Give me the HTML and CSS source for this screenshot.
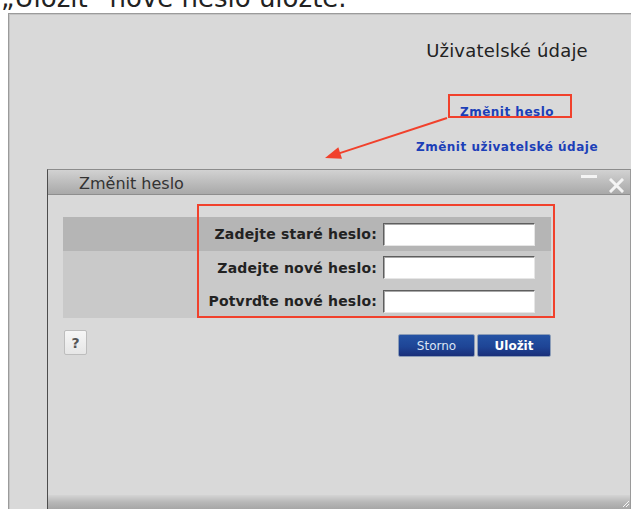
FILE: index.html
```html
<!DOCTYPE html>
<html lang="cs">
<head>
<meta charset="utf-8">
<title>Změnit heslo</title>
<link rel="stylesheet" href="styles.css">
</head>
<body>
<p class="caption"><span class="caption-line">„Uložit“ nové heslo uložte.</span></p>

<div class="frame">
  <div class="user-panel">
    <h2 class="panel-title">Uživatelské údaje</h2>
    <a class="panel-link first" href="#">Změnit heslo</a>
    <a class="panel-link" href="#">Změnit uživatelské údaje</a>
  </div>
</div>

<div class="dialog">
  <div class="dialog-titlebar">
    <span class="dialog-title">Změnit heslo</span>
    <div class="window-controls">
      <svg class="ctl-min" width="16" height="4" viewBox="0 0 16 4"><rect x="0" y="0" width="16" height="3" fill="#f4f4f4"/></svg>
      <svg class="ctl-close" width="15" height="15" viewBox="0 0 15 15"><path d="M2 2 L13 13 M13 2 L2 13" stroke="#f4f4f4" stroke-width="3" stroke-linecap="square"/></svg>
    </div>
  </div>

  <div class="dialog-body">
    <form class="pwd-form">
      <div class="pwd-row shaded">
        <label class="pwd-label" for="old">Zadejte staré heslo:</label>
        <input class="pwd-input" id="old" type="password">
      </div>
      <div class="pwd-row mid">
        <label class="pwd-label" for="new">Zadejte nové heslo:</label>
        <input class="pwd-input" id="new" type="password">
      </div>
      <div class="pwd-row">
        <label class="pwd-label" for="confirm">Potvrďte nové heslo:</label>
        <input class="pwd-input" id="confirm" type="password">
      </div>
    </form>

    <div class="dialog-actions">
      <button class="help-btn" type="button">?</button>
      <div class="action-buttons">
        <button class="btn" type="button">Storno</button>
        <button class="btn primary" type="button">Uložit</button>
      </div>
    </div>
  </div>

  <div class="dialog-footer">
    <svg class="grip" width="6" height="6" viewBox="0 0 6 6"><path d="M6 0 L0 6 M6 3 L3 6" stroke="#f6f6f6" stroke-width="1"/></svg>
  </div>
</div>

<svg class="annotations" width="631" height="509" viewBox="0 0 631 509">
  <rect x="449" y="95" width="122" height="22" fill="none" stroke="#f1412c" stroke-width="2"/>
  <rect x="198" y="205" width="356" height="112" fill="none" stroke="#f1412c" stroke-width="2"/>
  <line x1="447" y1="118" x2="339" y2="153.4" stroke="#f1412c" stroke-width="2"/>
  <polygon points="325,158 342,158.7 338.3,147.3" fill="#f1412c"/>
</svg>
</body>
</html>
```

FILE: styles.css
```css
html, body {
  margin: 0;
  padding: 0;
}

body {
  width: 631px;
  height: 509px;
  overflow: hidden;
  position: relative;
  background: #ffffff;
  font-family: "DejaVu Sans", Verdana, sans-serif;
}

/* heading line above the screenshot frame, only its lower part shows */
.caption {
  margin: 0;
  height: 13px;
  overflow: hidden;
}

.caption-line {
  display: block;
  margin-top: -17px;
  padding-left: 1px;
  font-size: 26px;
  line-height: 30px;
  color: #222;
  white-space: nowrap;
}

/* application frame */
.frame {
  margin-left: 8px;
  height: 500px;
  background: #d9d9d9;
  border-top: 1px solid #9b9b9b;
  border-left: 1px solid #9b9b9b;
  box-shadow: inset 1px 1px 0 #c4c4c4;
}

.user-panel {
  display: flex;
  flex-direction: column;
  align-items: center;
  width: 200px;
  margin-left: 398px;
  padding-top: 26px;
}

.panel-title {
  margin: 0;
  font-size: 18px;
  line-height: 22px;
  letter-spacing: 0.2px;
  font-weight: normal;
  color: #222;
  white-space: nowrap;
}

.panel-link {
  font-size: 12px;
  line-height: 14px;
  letter-spacing: 0.5px;
  font-weight: bold;
  color: #1c3fb8;
  text-decoration: none;
  white-space: nowrap;
  margin-top: 21px;
}

.panel-link.first {
  margin-top: 43px;
}

/* dialog window */
.dialog {
  position: absolute;
  left: 47px;
  top: 169px;
  width: 582px;
  height: 339px;
  display: flex;
  flex-direction: column;
  background: #d9d9d9;
  border-top: 1px solid #8c8c8c;
  border-left: 1px solid #4d4d4d;
  border-right: 1px solid #9a9a9a;
}

.dialog-titlebar {
  height: 24px;
  flex: none;
  display: flex;
  align-items: center;
  justify-content: space-between;
  padding-left: 31px;
  background: linear-gradient(#d2d2d2, #bdbdbd 50%, #a9a9a9);
  border-bottom: 1px solid #8e8e8e;
}

.dialog-title {
  font-size: 16px;
  color: #333;
  padding-top: 2px;
}

.window-controls {
  display: flex;
  align-items: flex-start;
  align-self: flex-start;
  gap: 12px;
  padding-top: 5px;
  padding-right: 6px;
}

.ctl-min {
  display: block;
}

.ctl-close {
  display: block;
  margin-top: 3px;
}

.dialog-body {
  flex: 1;
  padding: 22px 0 0 15px;
}

.pwd-form {
  width: 488px;
  margin: 0;
  background: #c9c9c9;
}

.pwd-row {
  display: grid;
  grid-template-columns: 1fr 152px;
  column-gap: 6px;
  align-items: center;
  height: 34px;
  padding-right: 16px;
}

.pwd-row.shaded {
  background: #b5b5b5;
}

.pwd-row.mid {
  height: 33px;
}

.pwd-label {
  text-align: right;
  font-size: 14px;
  letter-spacing: 0.2px;
  font-weight: bold;
  color: #222;
  white-space: nowrap;
}

.pwd-input {
  box-sizing: border-box;
  width: 152px;
  height: 23px;
  margin: 0;
  padding: 0 3px;
  background: #fff;
  border: 1px solid;
  border-color: #5e5e5e #e6e6e6 #e6e6e6 #5e5e5e;
  box-shadow: inset 1px 1px 0 #a8a8a8;
}

.dialog-actions {
  width: 488px;
  display: flex;
  justify-content: space-between;
  align-items: flex-start;
  margin-top: 12px;
}

.help-btn {
  box-sizing: border-box;
  width: 23px;
  height: 25px;
  margin-left: 1px;
  padding: 0;
  border: 1px solid #bdbdbd;
  border-radius: 2px;
  background: linear-gradient(#f6f6f6, #e6e6e6);
  font-family: "DejaVu Sans", Verdana, sans-serif;
  font-size: 14px;
  font-weight: bold;
  color: #555;
}

.action-buttons {
  display: flex;
  gap: 2px;
  margin-top: 4px;
}

.btn {
  box-sizing: border-box;
  height: 23px;
  width: 77px;
  padding: 0;
  border: 1px solid #8c9db8;
  border-radius: 2px;
  background: linear-gradient(#2553a4, #1e4596 55%, #1a2f7a);
  font-family: "DejaVu Sans", Verdana, sans-serif;
  font-size: 12px;
  color: #dbe4f4;
}

.btn.primary {
  width: 74px;
  font-weight: bold;
  color: #fff;
}

.dialog-footer {
  height: 14px;
  flex: none;
  display: flex;
  justify-content: flex-end;
  align-items: flex-end;
  background: linear-gradient(#d4d4d4, #b8b8b8 50%, #a6a6a6);
}

.grip {
  display: block;
  margin: 0 1px 2px 0;
}

/* red callouts drawn over the page */
.annotations {
  position: absolute;
  left: 0;
  top: 0;
  pointer-events: none;
}
```
